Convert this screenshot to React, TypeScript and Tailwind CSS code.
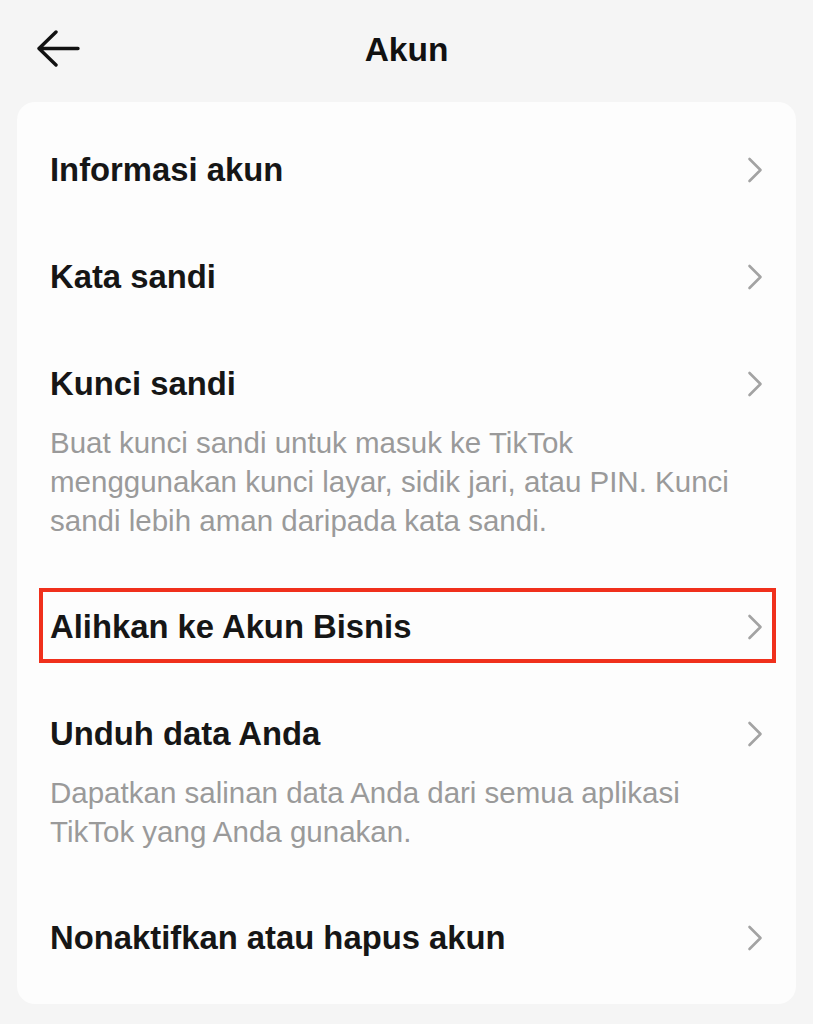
import React from "react";

function Chevron() {
  return (
    <svg width="16" height="26" viewBox="0 0 16 26" className="shrink-0">
      <path d="M2.5 2 L13.5 13 L2.5 24" fill="none" stroke="#a3a3a3" strokeWidth="2.6" strokeLinecap="round" strokeLinejoin="round" />
    </svg>
  );
}

function Row({ title, desc, highlight }: { title: string; desc?: string[]; highlight?: boolean }) {
  return (
    <div className="relative pt-[34px] pb-[33px] pl-[33px] pr-[33px]">
      {highlight && (
        <div className="absolute left-[22px] right-[20px] top-[15px] bottom-[17px] border-[4px] border-[#f0301c]" />
      )}
      <div className="flex h-[40px] items-center justify-between">
        <span className="text-[32.8px] font-bold leading-[40px] text-[#161616]">{title}</span>
        <Chevron />
      </div>
      {desc && (
        <div className="mt-[19px] whitespace-nowrap text-[29.5px] leading-[39px] text-[#9a9a9a]">
          {desc.map((l, i) => (
            <div key={i}>{l}</div>
          ))}
        </div>
      )}
    </div>
  );
}

export default function App() {
  return (
    <div
      className="min-h-screen w-full bg-[#f5f5f5]"
      style={{ fontFamily: '"Liberation Sans", Arial, sans-serif' }}
    >
      <div className="relative flex h-[100px] items-center justify-center">
        <div className="absolute left-[36px] top-[30px]">
          <svg width="44" height="38" viewBox="0 0 44 38">
            <path d="M3 18.5 H42 M20 2 L3 18.5 L20 35" fill="none" stroke="#111" strokeWidth="3.4" strokeLinecap="round" strokeLinejoin="round" />
          </svg>
        </div>
        <span className="text-[33.5px] font-bold text-[#111]">Akun</span>
      </div>
      <div className="mx-[17px] mt-[2px] rounded-[18px] bg-[#fdfdfd] pt-[14px] pb-[13px]">
        <Row title="Informasi akun" />
        <Row title="Kata sandi" />
        <Row
          title="Kunci sandi"
          desc={[
            "Buat kunci sandi untuk masuk ke TikTok",
            "menggunakan kunci layar, sidik jari, atau PIN. Kunci",
            "sandi lebih aman daripada kata sandi.",
          ]}
        />
        <Row title="Alihkan ke Akun Bisnis" highlight />
        <Row
          title="Unduh data Anda"
          desc={["Dapatkan salinan data Anda dari semua aplikasi", "TikTok yang Anda gunakan."]}
        />
        <Row title="Nonaktifkan atau hapus akun" />
      </div>
    </div>
  );
}
